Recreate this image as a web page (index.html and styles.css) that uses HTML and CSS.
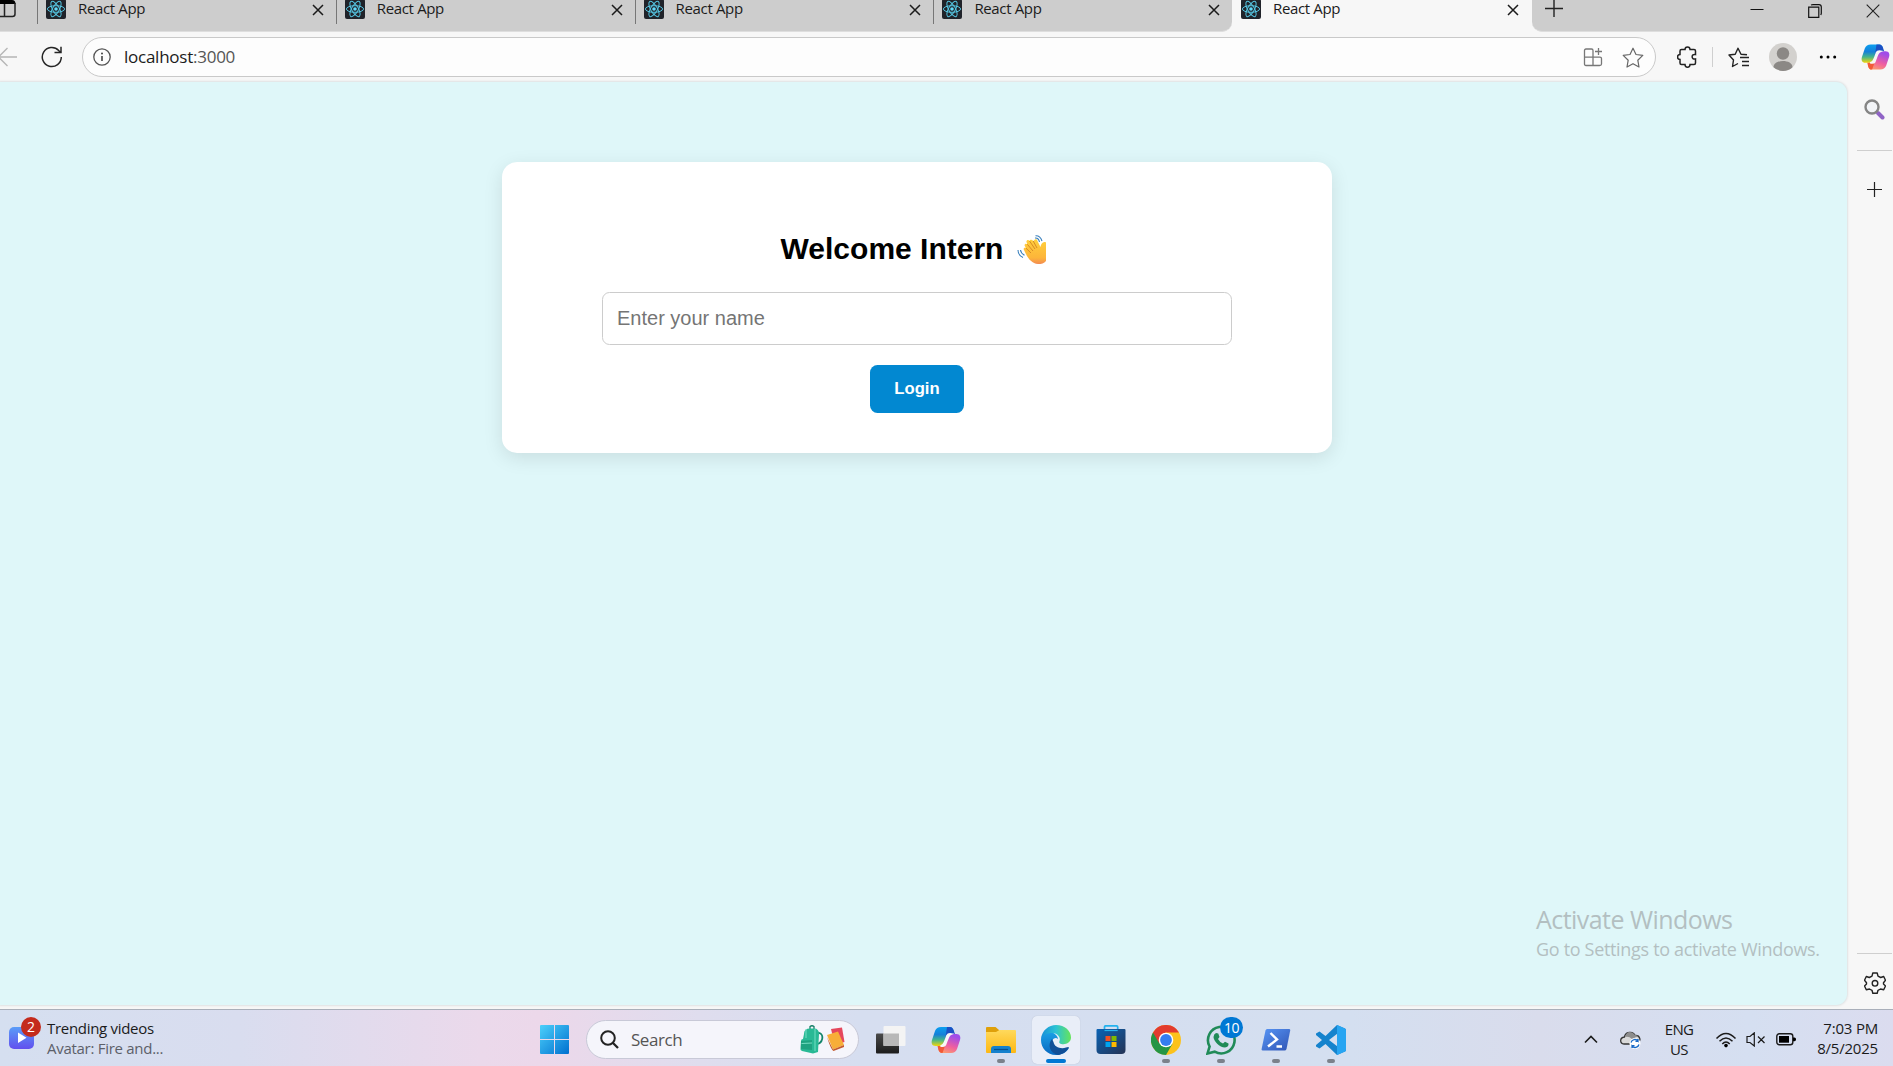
FILE: index.html
```html
<!DOCTYPE html>
<html lang="en">
<head>
<meta charset="utf-8">
<title>React App</title>
<link rel="stylesheet" href="styles.css">
</head>
<body>
<svg class="sprite" width="0" height="0" aria-hidden="true">
  <defs>
    <linearGradient id="cp-a" x1="0" y1="0" x2="0" y2="1"><stop offset="0" stop-color="#0a9ff0"/><stop offset=".4" stop-color="#1680d8"/><stop offset=".68" stop-color="#45b58a"/><stop offset="1" stop-color="#f2d60a"/></linearGradient>
    <linearGradient id="cp-b" x1=".4" y1="0" x2="0" y2="1"><stop offset="0" stop-color="#a04de8"/><stop offset=".5" stop-color="#ef5fa0"/><stop offset="1" stop-color="#ffab62"/></linearGradient>
    <linearGradient id="win" x1="0" y1="0" x2="1" y2="1"><stop offset="0" stop-color="#4cd0fb"/><stop offset="1" stop-color="#0070cf"/></linearGradient>
    <linearGradient id="vid" x1="0" y1="0" x2="0" y2="1"><stop offset="0" stop-color="#5a9df8"/><stop offset="1" stop-color="#6250ee"/></linearGradient>
    <linearGradient id="fold" x1="0" y1="0" x2="0" y2="1"><stop offset="0" stop-color="#ffd95c"/><stop offset="1" stop-color="#fdb813"/></linearGradient>
    <linearGradient id="edge-a" x1="0" y1="0" x2="1" y2="0"><stop offset="0" stop-color="#168fd8"/><stop offset=".5" stop-color="#2cc3d4"/><stop offset="1" stop-color="#66e45a"/></linearGradient>
    <linearGradient id="edge-b" x1="0" y1="0" x2="0" y2="1"><stop offset="0" stop-color="#1aa0e6"/><stop offset="1" stop-color="#0868c0"/></linearGradient>
    <linearGradient id="store" x1="0" y1="0" x2="1" y2="1"><stop offset="0" stop-color="#0a63b5"/><stop offset="1" stop-color="#253354"/></linearGradient>
    <linearGradient id="ps" x1="0" y1="0" x2="1" y2="1"><stop offset="0" stop-color="#5795f5"/><stop offset="1" stop-color="#3055b5"/></linearGradient>
    <linearGradient id="hand" x1="0" y1="0" x2="0" y2="1"><stop offset="0" stop-color="#ffd03c"/><stop offset=".75" stop-color="#fdb53a"/><stop offset="1" stop-color="#f38b52"/></linearGradient>
    <linearGradient id="dark" x1="0" y1="0" x2="0" y2="1"><stop offset="0" stop-color="#4a4a4a"/><stop offset="1" stop-color="#1c1c1c"/></linearGradient>
    <symbol id="react" viewBox="0 0 20 20">
      <rect width="20" height="20" rx="2" fill="#20232a"/>
      <g fill="none" stroke="#55c4e0" stroke-width="1"><ellipse cx="10" cy="10" rx="8.6" ry="3.3"/><ellipse cx="10" cy="10" rx="8.6" ry="3.3" transform="rotate(60 10 10)"/><ellipse cx="10" cy="10" rx="8.6" ry="3.3" transform="rotate(120 10 10)"/></g>
      <circle cx="10" cy="10" r="1.8" fill="#61dafb"/>
    </symbol>
    <symbol id="close" viewBox="0 0 12 12"><path d="M1 1L11 11M11 1L1 11" stroke="#1b1b1b" stroke-width="1.5"/></symbol>
    <symbol id="copilot" viewBox="0 0 30 28">
      <path d="M10 1H19C21 1 22 2.5 22.5 4L23 6H20C17.5 6 16.5 7.5 16 9L13.5 17C13 19 11.5 20 9.5 20H4.500C1 20 0 17 1 14L4 5C5 2.500 7 1 10 1Z" fill="url(#cp-a)"/>
      <path d="M20 27H11C9 27 8 25.500 7.500 24L7 22H10C12.500 22 13.500 20.500 14 19L16.500 11C17 9 18.500 8 20.500 8H25.500C29 8 30 11 29 14L26 23C25 25.500 23 27 20 27Z" fill="url(#cp-b)"/>
      <path d="M16 1H19C21 1 22 2.500 22.500 4L24 8H20.500C18 8 17 9.500 16.500 11L14.500 17 13.600 16.500 15 8Z" fill="#1b50c4"/>
      <path d="M14 20L11.500 27H11C9 27 8 25.500 7.500 24L6.500 20H9.500C12 20 13 18.500 13.500 17Z" fill="#f25a38"/>
      <path d="M16 9.500C16.700 8 18 7.600 20.500 8C18 9 17.500 10 14.300 19C13.700 20.200 12.400 20.700 9.500 20C12 19.600 13 18.500 16 9.500Z" fill="#f7f7f7" stroke="#f7f7f7" stroke-width="1.600"/>
    </symbol>
  </defs>
</svg>

<div class="desktop">
  <header class="tabs">
    <div class="strip strip-left">
      <div class="tab-menu"><svg width="16" height="18" viewBox="0 0 16 18"><path d="M0 0H12Q15.500 0 15.500 4H0Z"/><path d="M0 16.500H12.500Q15 16.500 15 14V3M4.500 4V16" fill="none" stroke="#222" stroke-width="1.500"/></svg></div>
      <div class="tab"><svg class="fav"><use href="#react"/></svg><span>React App</span><svg class="x"><use href="#close"/></svg></div>
      <div class="tab"><svg class="fav"><use href="#react"/></svg><span>React App</span><svg class="x"><use href="#close"/></svg></div>
      <div class="tab"><svg class="fav"><use href="#react"/></svg><span>React App</span><svg class="x"><use href="#close"/></svg></div>
      <div class="tab"><svg class="fav"><use href="#react"/></svg><span>React App</span><svg class="x"><use href="#close"/></svg></div>
    </div>
    <div class="tab active"><svg class="fav"><use href="#react"/></svg><span>React App</span><svg class="x"><use href="#close"/></svg></div>
    <div class="strip strip-right">
      <svg class="new-tab" width="18" height="18" viewBox="0 0 18 18"><path d="M0 9.500H18M9 0V18" stroke="#222" stroke-width="1.400"/></svg>
      <div class="win-buttons">
        <svg width="14" height="14" viewBox="0 0 14 14"><path d="M.5 5.500H13.500" stroke="#111" stroke-width="1"/></svg>
        <svg width="14" height="14" viewBox="0 0 14 14"><path d="M.7 3.200H10.800V13.300H.7ZM3 1Q4 .6 5 .6H11Q13.300.6 13.300 3V9.500L12.800 11" fill="none" stroke="#111" stroke-width="1.200"/></svg>
        <svg width="14" height="14" viewBox="0 0 14 14"><path d="M.7.700L13.300 13.300M13.300.700L.7 13.300" stroke="#222" stroke-width="1.100"/></svg>
      </div>
    </div>
  </header>

  <nav class="toolbar">
    <svg class="back" width="17" height="20" viewBox="0 0 17 20"><path d="M17 10H0M7.500 1L-1.500 10L7.500 19" fill="none" stroke="#b5b5b5" stroke-width="1.300"/></svg>
    <svg class="reload" width="22" height="22" viewBox="0 0 22 22"><path d="M20.300 11A9.500 9.500 0 1 1 17.700 4.500L19.700 6.500M20 .8V6.500H13.500" fill="none" stroke="#252525" stroke-width="1.500"/></svg>
    <div class="address">
      <svg width="18" height="18" viewBox="0 0 18 18"><circle cx="9" cy="9" r="8.200" fill="none" stroke="#555" stroke-width="1.300"/><path d="M9 8V13" stroke="#444" stroke-width="1.600"/><circle cx="9" cy="5.500" r="1" fill="#444"/></svg>
      <span class="url"><b>localhost</b>:3000</span>
      <svg class="apps" width="20" height="20" viewBox="0 0 20 20"><path d="M10 18.500H3Q1.500 18.500 1.500 17V3.500Q1.500 2 3 2H8.500Q10 2 10 3.500V18.500H16.500Q18.500 18.500 18.500 17V11.500Q18.500 10.200 17 10.200H1.500M15.500 1V8M12 4.500H19" fill="none" stroke="#777" stroke-width="1.300"/></svg>
      <svg width="22" height="21" viewBox="0 0 22 21"><path d="M11 1.200L14 7.500L20.800 8.400L15.800 13.200L17 20L11 16.700L5 20L6.200 13.200L1.200 8.400L8 7.500Z" fill="none" stroke="#666" stroke-width="1.200" stroke-linejoin="round"/></svg>
    </div>
    <div class="tools">
      <svg width="20" height="22" viewBox="0 0 20 22"><path d="M4.500 3.500H8C8 0 13 0 13 3.500H17Q18.500 3.500 18.500 5V8.500C14 7.500 14 14 18.500 13V17Q18.500 18.500 17 18.500H13C13 22 8 22 8 18.500H4.500Q3 18.500 3 17V13.500C-.3 13.500-.3 8.500 3 8.500V5Q3 3.500 4.500 3.500Z" fill="none" stroke="#222" stroke-width="1.500"/></svg>
      <i class="bar"></i>
      <svg width="21" height="21" viewBox="0 0 21 21"><path d="M19 7.800L13 7.200L10 1.200L7.200 7.200L1 8L5.500 13L4.500 19.500L10 16.500M12 10.500H21M14 14.500H21M14 18.500H21" fill="none" stroke="#222" stroke-width="1.400" stroke-linejoin="round"/></svg>
      <svg width="28" height="28" viewBox="0 0 28 28"><circle cx="14" cy="14" r="14" fill="#d3d1ce"/><circle cx="14" cy="10.500" r="6.200" fill="#8b8885"/><path d="M4.500 24.200C4.500 16 23.500 16 23.500 24.200A14 14 0 0 1 4.500 24.200Z" fill="#8b8885"/></svg>
      <svg width="18" height="4" viewBox="0 0 18 4"><circle cx="2.300" cy="2" r="1.500"/><circle cx="9" cy="2" r="1.500"/><circle cx="15.700" cy="2" r="1.500"/></svg>
      <svg class="cp" width="29" height="28"><use href="#copilot"/></svg>
    </div>
  </nav>

  <div class="content">
    <main class="page">
      <section class="card">
        <h1>Welcome Intern
          <svg width="29" height="31" viewBox="0 0 29 31"><path d="M7 16C6 14.500 7.500 13 9 14.200L7.800 12C7 10 9 9 10.300 10.300L9.500 8C9 6 11.500 5 12.500 7C13 5.200 15 5.200 16.200 7L18 5.600C19 5 20.200 5.500 20.500 7L23.500 13C24 10 26 7 29 8.500V27C27 29.500 24.500 30 21 30C14 29.500 10 23 7 16Z" fill="url(#hand)"/><path d="M9 14.200L14 19M10.300 10.300L16 17M12.500 7L18 15M16.200 7L20 14" stroke="#d88a25" stroke-width="1" fill="none"/><path d="M1 16C1 19 2.500 22 6 23.500M3.500 16C3.800 18.500 5 20 7.500 21.200M18.500 1.700C22 1.500 24 3.500 25 7M18 4C20.500 3.800 22 5.500 22.500 8" fill="none" stroke="#377fbd" stroke-width="1.100"/></svg>
        </h1>
        <input class="name" type="text" placeholder="Enter your name">
        <button class="login">Login</button>
      </section>
      <div class="watermark"><p class="wm-title">Activate Windows</p><p class="wm-text">Go to Settings to activate Windows.</p></div>
    </main>
    <aside class="side">
      <svg width="21" height="21" viewBox="0 0 21 21"><path d="M14 14L18.500 18.500" stroke="#9064c6" stroke-width="4" stroke-linecap="round"/><circle cx="8" cy="8" r="6.500" fill="#f2f4f7" stroke="#858585" stroke-width="2.400"/></svg>
      <hr>
      <svg width="15" height="15" viewBox="0 0 15 15"><path d="M0 7.500H15M7.500 0V15" stroke="#222" stroke-width="1.200"/></svg>
      <hr class="low">
      <svg width="22" height="22" viewBox="0 0 22 22"><path d="M8.800 1H13.200L14 4.200L16.700 5.500L19.700 4.500L21.500 8.300L19.500 10.800V12L21.500 14L19.700 17.800L16.500 17L14 18.300L13.200 21.300H8.800L8 18.300L5.500 17L2.300 17.800L.5 14L2.500 12V10.800L.5 8.300L2.300 4.500L5.300 5.500L8 4.200Z" fill="none" stroke="#222" stroke-width="1.400" stroke-linejoin="round"/><circle cx="11" cy="11.300" r="2.800" fill="none" stroke="#222" stroke-width="1.400"/></svg>
    </aside>
  </div>

  <footer class="taskbar">
    <div class="widget">
      <div class="video"><svg width="25" height="22" viewBox="0 0 25 22"><rect width="25" height="22" rx="5" fill="url(#vid)"/><path d="M9 5.500V16L17.500 10.700Z" fill="#fff"/></svg><span class="alert">2</span></div>
      <div class="news"><div>Trending videos</div><div class="sub">Avatar: Fire and...</div></div>
    </div>
    <div class="app"><svg width="29" height="29" viewBox="0 0 29 29"><path d="M1 0H14V14H0V1Q0 0 1 0ZM15 0H28Q29 0 29 1V14H15ZM0 15H14V29H1Q0 29 0 28ZM15 15H29V28Q29 29 28 29H15Z" fill="url(#win)"/></svg></div>
    <div class="search">
      <svg width="19" height="19" viewBox="0 0 19 19"><circle cx="8" cy="8" r="6.800" fill="none" stroke="#222" stroke-width="2"/><path d="M12.500 12.500L18 18" stroke="#222" stroke-width="2.300"/></svg>
      <span>Search</span>
      <svg class="bag" width="46" height="30" viewBox="0 0 46 30"><path d="M17 8C24 7 24 16 18 19" fill="none" stroke="#15866b" stroke-width="1.800"/><path d="M10 4V1.500Q12 0 14 1.500V4" fill="none" stroke="#147e66" stroke-width="1.300"/><path d="M4 9Q4 3.500 10 3.500H14Q19 3.500 19 9L18 27L13 28.500L2 26Q0 25.500 .5 23L1 16Q1 14 3 14Z" fill="#29b995"/><path d="M1 16L12 15V25L1 24Z" fill="#1ea280"/><path d="M1.500 18.500L12 18M6 4V13M15 4V26" stroke="#75dec3" stroke-width="1"/><path d="M31 4L42 2.500L44.500 17L35 20Z" fill="#e5475c"/><path d="M27 10L38 6.500L44 20L33 24.500Z" fill="#f8ae38"/><path d="M33 24.500L44 20V22L33.500 26Q31 25 27 12Z" fill="#c45a2e"/></svg>
    </div>
    <div class="apps-row">
      <div class="app"><svg width="30" height="28" viewBox="0 0 30 28"><rect y="7.500" width="23" height="20" rx="1" fill="url(#dark)"/><rect x="7.500" width="22" height="20" rx="1" fill="#f4f4f4"/><path d="M7.500 7.500H23V20H7.500Z" fill="#b8b8b8"/></svg></div>
      <div class="app"><svg width="30" height="28"><use href="#copilot"/></svg></div>
      <div class="app run"><svg width="30" height="28" viewBox="0 0 30 28"><path d="M0 2Q0 1 1 1H9.500L13 4V9H0Z" fill="#dfa00a"/><path d="M0 6H10L13.500 4H29Q30 4 30 5V26Q30 27 29 27H1Q0 27 0 26Z" fill="url(#fold)"/><path d="M5 27V23Q5 20 8 20H22Q25 20 25 23V27Z" fill="#1681cd"/><path d="M8 23.500H22" stroke="#075091" stroke-width="1.200"/></svg></div>
      <div class="app current"><svg width="30" height="30" viewBox="0 0 30 30"><path d="M0 15C0 10 4 7 9 7C13 7 17 11 17 14C14 11 10 15 11 19C12 25 19 26 28 23C25 28 20 30 15 30C6 30 0 23 0 15Z" fill="url(#edge-b)"/><path d="M11 14C6 20 9 28 17 30C22 29.500 26 26 28 22.500C27.500 21.500 26.500 22 25 22.500C20 24.500 13 22 12.500 17Z" fill="#114f97"/><path d="M0 14C1 5 8 0 15 0C24 0 30 6 30 12.500C30 17 26 19.200 22.500 19.200C19 19.200 17.500 18 18.500 16C20 13 17 8 11 8C6 8 2 10 0 14Z" fill="url(#edge-a)"/></svg></div>
      <div class="app"><svg width="30" height="29" viewBox="0 0 30 29"><path d="M8.500 5V2Q8.500 .8 9.700 .8H20.500Q21.700 .8 21.700 2V5" fill="none" stroke="#24b2ee" stroke-width="1.700"/><path d="M.5 5Q.5 4 1.500 4H28.500Q29.500 4 29.500 5V25Q29.500 29 25.500 29H4.500Q.5 29 .5 25Z" fill="url(#store)"/><path d="M8.500 5.500H21.700" stroke="#24b2ee" stroke-width="1.200"/><path d="M9.500 11H14.500V16H9.500Z" fill="#f25022"/><path d="M15.500 11H20.500V16H15.500Z" fill="#7fba00"/><path d="M9.500 17H14.500V22H9.500Z" fill="#00a4ef"/><path d="M15.500 17H20.500V22H15.500Z" fill="#ffb900"/></svg></div>
      <div class="app run"><svg width="30" height="30" viewBox="0 0 30 30"><circle cx="15" cy="15" r="15" fill="#fcc21c"/><path d="M15 15L2 7.500A15 15 0 0 0 15 30L21.500 18.700Z" fill="#259545"/><path d="M2 7.500A15 15 0 0 1 28 7.500H15Q9.500 8 8.500 18.700Z" fill="#e33b2e"/><circle cx="15" cy="15" r="7.300" fill="#fff"/><circle cx="15" cy="15" r="5.900" fill="#347df0"/></svg></div>
      <div class="app run"><svg width="30" height="30" viewBox="0 0 30 30"><path d="M1.500 28.500L3.600 21.500A13.300 13.300 0 1 1 8.700 26.700Z" fill="none" stroke="#208b58" stroke-width="2.600"/><path d="M10 8L12.300 8.500L13.500 12L12 14Q13.500 17 17 18.500L19 16.800L22.500 18.500Q23 22 19 22.500C13.500 22.500 7.500 16 7.500 12Q7.700 9 10 8Z" fill="#208b58"/></svg><span class="count">10</span></div>
      <div class="app run"><svg width="30" height="24" viewBox="0 0 30 24"><path d="M6 1H28Q29.500 1 29.200 2.500L25.500 21Q25 22.500 23.500 22.500H1.800Q.3 22.500 .6 21L4.500 2.500Q5 1 6 1Z" fill="url(#ps)"/><path d="M9.500 5L16 11.500L7 18.500M15.500 18.500H21" fill="none" stroke="#fff" stroke-width="2.400"/></svg></div>
      <div class="app run"><svg width="30" height="30" viewBox="0 0 30 30"><path d="M21 0L29 3.500Q30 4 30 5V25Q30 26 29 26.500L21 30L9.500 19L3.500 23.500L0 21.500V20L6 15L0 10V8.500L3.500 6.500L9.500 11ZM21.500 8.500L13 15L21.500 21.500Z" fill="#1583cd" fill-rule="evenodd"/><path d="M21 0L29 3.500Q30 4 30 5V25Q30 26 29 26.500L21 30Z" fill="#27a5f2"/></svg></div>
    </div>
    <div class="tray">
      <svg width="14" height="9" viewBox="0 0 14 9"><path d="M1 7.500L7 1.500L13 7.500" fill="none" stroke="#1b1b1b" stroke-width="1.600"/></svg>
      <svg class="cloud" width="22" height="19" viewBox="0 0 22 19"><path d="M4 14C-.5 13.500-.5 7.500 4.500 7C5 2 13 .5 15 5.500C20 5 22 11 17 14Z" fill="#d9d9d9" stroke="#333" stroke-width="1.300"/><path d="M5 7Q9 6 12 9L18 6Q14 5 13 3Q7 0 5 7Z" fill="#8d8d8d"/><circle cx="15" cy="13.500" r="5.500" fill="#fff"/><path d="M11 12.500A4 4 0 0 1 18 11V9M18 11.300H15.500M19 14.500A4 4 0 0 1 12 16V18M12 15.700H14.500" fill="none" stroke="#1769c7" stroke-width="1.300"/></svg>
      <div class="lang"><div>ENG</div><div>US</div></div>
      <svg class="wifi" width="22" height="16" viewBox="0 0 22 16"><path d="M1.500 6.500Q11-3.300 20.500 6.500M4.500 9.300Q11 2.600 17.500 9.300M7.300 12Q11 8 14.700 12" fill="none" stroke="#1b1b1b" stroke-width="1.500"/><circle cx="11" cy="13.600" r="1.800"/></svg>
      <svg class="mute" width="20" height="15" viewBox="0 0 20 15"><path d="M1 4.500H4L8.300 .8V14L4 10.500H1ZM12 4.500L18.500 11M18.500 4.500L12 11" fill="none" stroke="#1b1b1b" stroke-width="1.200"/></svg>
      <svg class="batt" width="20" height="13" viewBox="0 0 20 13"><rect x=".8" y=".8" width="16" height="11" rx="2.500" fill="none" stroke="#1b1b1b" stroke-width="1.400"/><rect x="3" y="3" width="10" height="6.700"/><path d="M17 4.500H18.500Q20 4.500 20 6.300T18.500 8.300H17Z"/></svg>
      <div class="clock"><div>7:03 PM</div><div>8/5/2025</div></div>
    </div>
  </footer>
</div>
</body>
</html>
```
FILE: styles.css
```css
* { box-sizing: border-box; }
body { margin: 0; overflow: hidden; font-family: "Open Sans", "Noto Sans", sans-serif; color: #1b1b1b; }
svg { display: block; flex: none; }
.sprite { position: absolute; }
.desktop { display: flex; flex-direction: column; width: 1893px; height: 1066px; background: #f7f7f7; }

/* Tab strip */
.tabs { display: flex; height: 32px; background: #f7f7f7; }
.strip { display: flex; background: #cdcdcd; border-bottom: 1px solid #dedede; }
.strip-left { width: 1232px; border-radius: 0 0 10px 0; overflow: hidden; }
.strip-right { flex: 1; justify-content: space-between; border-radius: 0 0 0 10px; padding: 0 13px 0 13px; }
.tab-menu { width: 37px; flex: none; }
.tab { display: flex; align-items: flex-start; width: 298.8px; height: 24px; flex: none; padding: 0 12px 0 8px; border-left: 1px solid #777; font-size: 15px; line-height: 20px; letter-spacing: -.35px; }
.tab.active { width: 300px; padding-right: 13px; border-color: transparent; }
.tab span { margin: -2px auto 0 12px; }
.fav { width: 20px; height: 20px; margin-top: -1px; }
.x { width: 12px; height: 12px; margin-top: 4px; }
.new-tab { margin-top: -1px; }
.win-buttons { display: flex; gap: 44px; padding-top: 4px; }

/* Toolbar */
.toolbar { display: flex; align-items: center; height: 50px; }
.reload { margin: 0 19px 0 24px; }
.address { display: flex; align-items: center; width: 1574px; height: 40px; padding: 0 11px 0 10px; border: 1px solid #c9c9c9; border-radius: 20px; background: #fdfdfd; }
.url { margin: 0 auto 2px 13px; font-size: 17px; letter-spacing: -.25px; color: #555; }
.url b { font-weight: 400; color: #1b1b1b; }
.apps { margin-right: 19px; }
.tools { display: flex; align-items: center; margin-left: 21px; }
.bar { width: 1px; height: 20px; margin: 0 15px; background: #cfcfcf; }
.tools svg:nth-of-type(3) { margin: 0 22px 0 20px; }
.cp { margin-left: 24px; }

/* Page */
.content { display: flex; height: 927px; }
.page { position: relative; width: 1847px; height: 923px; padding-top: 80px; border-radius: 0 11px 11px 0; background: #dff7f9; box-shadow: 0 0 2px 1px #dfe2e3; }
.card { display: flex; flex-direction: column; align-items: center; width: 830px; height: 291px; margin-left: 502px; padding-top: 69px; border-radius: 15px; background: #fff; box-shadow: 0 5px 19px rgba(0, 0, 0, .1); font-family: "Liberation Sans", Arial, sans-serif; }
.card h1 { display: flex; align-items: center; gap: 14px; height: 36px; margin: 0 0 25px; padding-right: 7px; font-size: 30px; line-height: 36px; color: #000; }
.name { width: 630px; height: 53px; padding: 0 14px; border: 1px solid #ccc; border-radius: 7.500px; font: 20px "Liberation Sans", Arial, sans-serif; background: #fff; }
.name::placeholder { color: #757575; }
.login { width: 94px; height: 48px; margin-top: 20px; padding: 0 0 1px; border: 0; border-radius: 7.500px; background: #0288d1; color: #fff; font: bold 16.67px "Liberation Sans", Arial, sans-serif; }
.watermark { position: absolute; left: 1536px; top: 820px; color: #b3bfc1; white-space: nowrap; }
.watermark p { margin: 0; }
.wm-title { font-size: 25px; line-height: 34px; letter-spacing: -.55px; }
.wm-text { font-size: 18px; line-height: 26px; letter-spacing: -.32px; }

/* Edge sidebar */
.side { display: flex; flex-direction: column; align-items: center; width: 46px; padding: 17px 0 0 9px; height: 924px; }
.side hr { width: 35px; height: 1px; margin: 30px 0 31px; border: 0; background: #cfcfcf; }
.side hr.low { margin: auto 0 18px; }
.side svg:last-child { margin-bottom: 12px; }

/* Taskbar */
.taskbar { display: flex; align-items: center; height: 57px; padding-top: 3px; border-top: 1px solid #a9afba; background: linear-gradient(90deg, #d5dff0 0, #d9ddef 240px, #ebd9eb 480px, #ecd8ea 540px, #dfddee 700px, #d6def0 860px, #d4dff0 1350px, #d9dcec 1540px, #d5dff1 1750px, #dbdcef 1893px); font-size: 15px; }
.widget { display: flex; align-items: flex-start; gap: 13px; width: 530px; height: 40px; padding-left: 9px; }
.video { position: relative; padding-top: 7px; }
.alert, .count { position: absolute; display: grid; place-items: center; border-radius: 50%; color: #fff; }
.alert { left: 12px; top: -3px; width: 20px; height: 20px; background: #c42b1c; font-size: 14px; }
.news { line-height: 20px; letter-spacing: -.3px; margin-top: -2px; }
.sub { color: #5c6069; letter-spacing: -.28px; }
.search { display: flex; align-items: center; width: 273px; height: 39px; margin: 0 8px; padding: 0 12px 0 13px; border: 1px solid #c8c9d7; border-radius: 20px; background: #f5f5fb; font-size: 17px; letter-spacing: -.45px; color: #555; }
.search span { margin: 0 auto 0 12px; }
.apps-row { display: flex; gap: 7px; }
.app { position: relative; display: grid; place-items: center; width: 48px; height: 48px; border-radius: 5px; }
.current { background: #e9eef8; box-shadow: 0 0 1px #aab3c2; }
.run::after, .current::after { content: ""; position: absolute; left: 20px; bottom: 1px; width: 8px; height: 4px; border-radius: 2px; background: #7b818b; }
.current::after { left: 14px; width: 20px; background: #0078d4; }
.count { left: 23px; top: 1px; width: 23px; height: 21px; border-radius: 11px; background: #0078d4; font-size: 14px; letter-spacing: -.5px; }
.tray { display: flex; align-items: center; margin-left: auto; padding-right: 15px; line-height: 20px; letter-spacing: -.4px; }
.cloud { margin: 0 22px; }
.lang { width: 30px; margin-top: -2px; text-align: center; letter-spacing: -.7px; }
.wifi { margin: 0 9px 0 21px; }
.mute { margin-right: 10px; }
.clock { width: 82px; margin-top: -3px; text-align: right; letter-spacing: -.2px; }
```
